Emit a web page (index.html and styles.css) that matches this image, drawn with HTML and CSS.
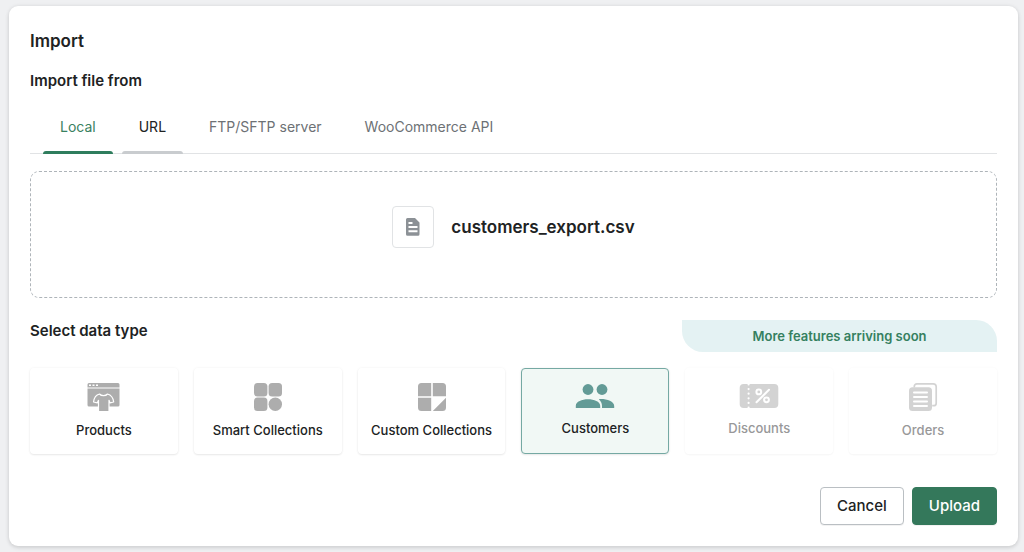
FILE: index.html
```html
<!DOCTYPE html>
<html lang="en">
<head>
<meta charset="utf-8">
<meta name="viewport" content="width=device-width, initial-scale=1">
<title>Import</title>
<link rel="stylesheet" href="styles.css">
</head>
<body>
<main class="card">
  <h1 class="title">Import</h1>
  <h2 class="heading">Import file from</h2>
  <div class="tabs" role="tablist">
    <button class="tab tab-active" type="button" role="tab" aria-selected="true">Local</button>
    <button class="tab tab-hover" type="button" role="tab" aria-selected="false">URL</button>
    <button class="tab" type="button" role="tab" aria-selected="false">FTP/SFTP server</button>
    <button class="tab" type="button" role="tab" aria-selected="false">WooCommerce API</button>
  </div>
  <div class="dropzone">
    <span class="file-thumb">
      <svg width="14" height="18" viewBox="0 0 14 18" aria-hidden="true"><path fill="#8c9196" fill-rule="evenodd" d="M1.5 0H9l4.500 4.500v11.700a1.500 1.500 0 0 1-1.500 1.500H1.500A1.500 1.500 0 0 1 0 16.200V1.500A1.500 1.500 0 0 1 1.500 0zM2.500 4v2h4V4zM2.500 8v2h9V8zM2.500 12.200v2h9v-2z"/></svg>
    </span>
    <span class="file-name">customers_export.csv</span>
  </div>
  <div class="type-head">
    <h2 class="heading" id="type-label">Select data type</h2>
    <p class="banner">More features arriving soon</p>
  </div>
  <div class="types" role="radiogroup" aria-labelledby="type-label">
    <label class="type">
      <input class="type-input" type="radio" name="type" value="products">
      <svg width="34" height="30" viewBox="0 0 34 30" aria-hidden="true">
        <path fill="#adadad" d="M2 1h29a1.500 1.500 0 0 1 1.500 1.500V5.600H.5V2.500A1.500 1.500 0 0 1 2 1zM.5 6.600h32v16.400a1.500 1.500 0 0 1-1.500 1.500H2A1.500 1.500 0 0 1 .5 23z"/>
        <path fill="#fff" d="M2 2.500h2v1.500H2zM5.500 2.500h2v1.500h-2zM9 2.500h2v1.500H9z"/>
        <path fill="#adadad" stroke="#fff" stroke-width="1.200" stroke-linejoin="round" d="M12.500 12c1.800 2.200 6.200 2.200 8 0 3 .8 5.500 2.500 6.200 8l-3.700.8-1-2.500V29.500H11.500V18.300l-1.200 2.500-3.800-.8c.7-5.500 3-7.200 6-8z"/>
      </svg>
      <span class="type-name">Products</span>
    </label>
    <label class="type">
      <input class="type-input" type="radio" name="type" value="smart">
      <svg width="30" height="30" viewBox="0 0 30 30" fill="#adadad" aria-hidden="true"><rect x="1" y="1" width="13.400" height="13.400" rx="3.500"/><rect x="15.600" y="1" width="13.400" height="13.400" rx="3.500"/><rect x="1" y="15.600" width="13.400" height="13.400" rx="3.500"/><circle cx="22.300" cy="22.300" r="6.700"/></svg>
      <span class="type-name">Smart Collections</span>
    </label>
    <label class="type">
      <input class="type-input" type="radio" name="type" value="custom">
      <svg width="30" height="30" viewBox="0 0 30 30" fill="#adadad" aria-hidden="true"><path d="M4.500 1h9.700v13.200H1V4.500A3.500 3.500 0 0 1 4.500 1zM15.800 1h9.700A3.500 3.500 0 0 1 29 4.500v9.700H15.800zM1 15.800h13.200V29H4.500A3.500 3.500 0 0 1 1 25.500zM29 15.800v9.700a3.500 3.500 0 0 1-3.500 3.500H15.800z"/></svg>
      <span class="type-name">Custom Collections</span>
    </label>
    <label class="type type-low">
      <input class="type-input" type="radio" name="type" value="customers" checked>
      <svg width="40" height="26" viewBox="0 0 40 26" fill="#639b96" aria-hidden="true"><circle cx="13" cy="6.500" r="5.400"/><circle cx="27" cy="6.500" r="5.400"/><path d="M.8 25v-2.200C.8 18.500 7 16.200 13 16.200s12.200 2.300 12.200 6.600V25zM23.800 16.200c7-.6 15.400 2 15.400 6.800v2H27v-2c0-3-1.200-5-3.200-6.800z"/></svg>
      <span class="type-name">Customers</span>
    </label>
    <label class="type type-low type-disabled">
      <input class="type-input" type="radio" name="type" value="discounts" disabled>
      <svg width="40" height="26" viewBox="0 0 40 26" aria-hidden="true">
        <rect x=".7" y="1" width="38.600" height="24" rx="4" fill="#d3d3d3"/>
        <path d="M9.600 1v24" stroke="#fff" stroke-width="2.200" stroke-linecap="round" stroke-dasharray="0 4.600" stroke-dashoffset="-.5"/>
        <g fill="none" stroke="#fff" stroke-width="2" stroke-linecap="round"><path d="M17.500 19.200L30 6.800"/><circle cx="19.800" cy="8.900" r="2.400"/><circle cx="27.500" cy="16.800" r="2.400"/></g>
      </svg>
      <span class="type-name">Discounts</span>
    </label>
    <label class="type type-disabled">
      <input class="type-input" type="radio" name="type" value="orders" disabled>
      <svg width="30" height="30" viewBox="0 0 30 30" aria-hidden="true">
        <path fill="none" stroke="#d3d3d3" stroke-width="1.700" d="M6.300 5.500V4.300A2.500 2.500 0 0 1 8.800 1.800h16.400a3 3 0 0 1 3 3v16.400a2.500 2.500 0 0 1-2.500 2.500h-1.500"/>
        <rect x="1" y="5.300" width="23" height="23.700" rx="3.500" fill="#d3d3d3"/>
        <path d="M6 10.500h13M6 15h13M6 19.500h13M6 24h13" stroke="#fff" stroke-width="2" stroke-linecap="round"/>
      </svg>
      <span class="type-name">Orders</span>
    </label>
  </div>
  <div class="actions">
    <button class="btn" type="button">Cancel</button>
    <button class="btn btn-primary" type="button">Upload</button>
  </div>
</main>
</body>
</html>
```
FILE: styles.css
```css
* { box-sizing: border-box; }
body {
  margin: 0;
  padding: 6px 6px 6px 9px;
  background: #eff0f2;
  color: #202223;
  font-family: Inter, "Liberation Sans", sans-serif;
}
.card {
  padding: 22px 21px 21px;
  background: #fff;
  border-radius: 9px;
  box-shadow: 0 0 4px rgba(23, 24, 24, .08), 0 2px 4px rgba(0, 0, 0, .1);
}
.title, .heading, .banner { margin: 0; }
.title { font-size: 17px; line-height: 26px; font-weight: 600; }
.heading { font-size: 15px; line-height: 22px; font-weight: 600; }
.title + .heading { margin-top: 16px; }
.tabs {
  display: flex;
  gap: 9px;
  margin-top: 8px;
  padding-left: 13px;
  border-bottom: 1px solid #e1e3e5;
}
.tab {
  position: relative;
  height: 54px;
  margin-bottom: -1px;
  padding: 0 17px;
  border: 0;
  background: none;
  color: #6d7175;
  font: 400 14px/22px Inter, "Liberation Sans", sans-serif;
}
.tab-active { color: #398161; }
.tab-hover { color: #202223; }
.tab-active::after, .tab-hover::after {
  content: "";
  position: absolute;
  left: 0;
  right: 0;
  bottom: 0;
  height: 3px;
  border-radius: 3px 3px 0 0;
  background: #c9cccf;
}
.tab-active::after { background: #2f7d5d; }
.dropzone {
  display: flex;
  justify-content: center;
  align-items: center;
  gap: 17px;
  margin-top: 17px;
  padding: 34px 16px 49px;
  border: 1px dashed #aeb4b9;
  border-radius: 9px;
}
.file-thumb {
  display: flex;
  align-items: center;
  justify-content: center;
  width: 42px;
  height: 42px;
  border: 1px solid #e1e3e5;
  border-radius: 4px;
}
.file-name { font-size: 17px; line-height: 26px; font-weight: 600; }
.type-head {
  display: flex;
  justify-content: space-between;
  align-items: flex-start;
  margin-top: 22px;
}
.banner {
  width: 315px;
  padding: 5px 0;
  border-radius: 0 21px 0 21px;
  background: #e4f2f3;
  color: #35805f;
  font-size: 13px;
  line-height: 22px;
  font-weight: 600;
  text-align: center;
}
.types {
  display: grid;
  grid-template-columns: repeat(6, 1fr);
  gap: 16px;
  margin-top: 16px;
}
.type {
  position: relative;
  display: flex;
  flex-direction: column;
  align-items: center;
  gap: 8px;
  height: 86px;
  padding-top: 13px;
  border: 1px solid transparent;
  border-radius: 4px;
  box-shadow: 0 0 3px rgba(23, 24, 24, .05), 0 1px 2px rgba(0, 0, 0, .08);
}
.type-low { gap: 9px; padding-top: 14px; }
.type-input {
  position: absolute;
  inset: 0;
  margin: 0;
  appearance: none;
}
.type:has(:checked) { background: #f1f8f5; border-color: #75a9a3; }
.type-name { font-size: 13px; line-height: 20px; font-weight: 500; }
.type-disabled {
  color: #989899;
  box-shadow: 0 0 3px rgba(23, 24, 24, .03), 0 1px 2px rgba(0, 0, 0, .03);
}
.actions {
  display: flex;
  justify-content: flex-end;
  gap: 8px;
  margin-top: 33px;
}
.btn {
  height: 38px;
  padding: 0 16px;
  border: 1px solid #babfc3;
  border-radius: 4px;
  background: #fff;
  color: #202223;
  font: 500 15px/22px Inter, "Liberation Sans", sans-serif;
  box-shadow: 0 1px 0 rgba(0, 0, 0, .05);
}
.btn-primary { border-color: #34785b; background: #34785b; color: #fff; }
```
